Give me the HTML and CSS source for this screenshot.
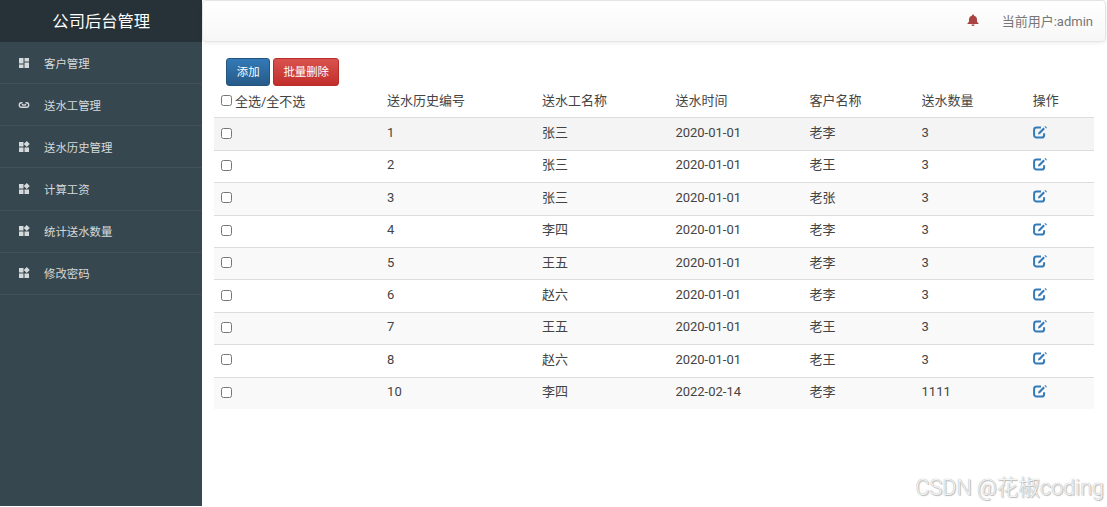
FILE: index.html
```
<!DOCTYPE html>
<html lang="zh-CN">
<head>
    <meta charset="UTF-8">
    <title>公司后台管理</title>
    <link rel="stylesheet" href="styles.css">
</head>
<body>
    <svg class="sprite">
        <symbol id="dashboard" viewBox="0 0 24 24"><path d="M2 2h9v11H2zM13 2h9v7h-9zM2 15h9v7H2zM13 11h9v11h-9z"/></symbol>
        <symbol id="link" viewBox="0 0 24 24"><path d="M9 7.500H7a4.500 4.500 0 0 0 0 9h10a4.500 4.500 0 0 0 0-9h-2M8 10.500c2 2.500 6 2.500 8 0" fill="none" stroke="currentColor" stroke-width="2.600"/></symbol>
        <symbol id="widgets" viewBox="0 0 24 24"><path d="M2 2h9v9H2zM2 13h9v9H2zM13 13h9v9h-9zM17.500 0l6 6-6 6-6-6z"/></symbol>
        <symbol id="bell" viewBox="0 0 24 24"><path d="M12 1c1.200 0 2 .8 2 2v.6c3.800.9 6 3.600 6 7.400v4.500l3 3V20H1v-1.500l3-3V11c0-3.800 2.200-6.500 6-7.400V3c0-1.200.8-2 2-2zM9 21h6a3 3 0 0 1-6 0z"/></symbol>
        <symbol id="edit" viewBox="0 0 14 13"><path d="M8 1.600H3.500A2.400 2.400 0 0 0 1.100 4v5.200a2.400 2.400 0 0 0 2.400 2.400h5.200a2.400 2.400 0 0 0 2.400-2.400V7.200" fill="none" stroke="currentColor" stroke-width="2"/><path d="M5 8.600l.5-2.200 4.900-4.900 1.500 1.500-4.900 4.900z"/><path d="M11.500.7l.5-.5h.6l1.100 1.100v.6l-.5.500z"/></symbol>
    </svg>
    <div class="sidebar">
        <div class="logo">公司后台管理</div>
        <ul class="menu">
            <li><svg><use href="#dashboard"/></svg>客户管理</li>
            <li><svg><use href="#link"/></svg>送水工管理</li>
            <li><svg><use href="#widgets"/></svg>送水历史管理</li>
            <li><svg><use href="#widgets"/></svg>计算工资</li>
            <li><svg><use href="#widgets"/></svg>统计送水数量</li>
            <li><svg><use href="#widgets"/></svg>修改密码</li>
        </ul>
    </div>
    <div class="main">
        <div class="navbar">
            <svg class="bell"><use href="#bell"/></svg>
            <span>当前用户:admin</span>
        </div>
        <div class="content">
            <div class="toolbar">
                <button class="btn btn-primary">添加</button>
                <button class="btn btn-danger">批量删除</button>
            </div>
            <div class="table">
                <div class="row head">
                    <label><input type="checkbox" id="checkAll">全选/全不选</label>
                    <span>送水历史编号</span><span>送水工名称</span><span>送水时间</span><span>客户名称</span><span>送水数量</span><span>操作</span>
                </div>
                <div id="rows"></div>
            </div>
        </div>
    </div>
    <div class="watermark">CSDN @花椒coding</div>
    <script>
        const rows = document.getElementById('rows');
        const checkAll = document.getElementById('checkAll');
        const history = [
            [1, '张三', '2020-01-01', '老李', 3],
            [2, '张三', '2020-01-01', '老王', 3],
            [3, '张三', '2020-01-01', '老张', 3],
            [4, '李四', '2020-01-01', '老李', 3],
            [5, '王五', '2020-01-01', '老李', 3],
            [6, '赵六', '2020-01-01', '老李', 3],
            [7, '王五', '2020-01-01', '老王', 3],
            [8, '赵六', '2020-01-01', '老王', 3],
            [10, '李四', '2022-02-14', '老李', 1111]
        ];

        rows.innerHTML = history.map(item => `
            <div class="row">
                <label><input type="checkbox"></label>
                ${item.map(value => `<span>${value}</span>`).join('')}
                <svg class="edit"><use href="#edit"/></svg>
            </div>`).join('');

        checkAll.addEventListener('change', () => {
            rows.querySelectorAll('input').forEach(box => box.checked = checkAll.checked);
        });
    </script>
</body>
</html>
```
FILE: styles.css
```
* {
    box-sizing: border-box;
}
body {
    margin: 0;
    display: flex;
    height: 507px;
    overflow: hidden;
    font-family: Roboto, "Noto Sans CJK SC", sans-serif;
    font-size: 13px;
    color: #444;
    background: #fff;
}
.sprite {
    position: absolute;
    width: 0;
    height: 0;
}
svg {
    fill: currentColor;
}
.sidebar {
    width: 202.400px;
    height: 506px;
    flex-shrink: 0;
    background: #37474f;
}
.logo {
    height: 42px;
    padding-top: 1px;
    line-height: 42px;
    text-align: center;
    font-size: 16.300px;
    color: #fff;
    background: #263238;
}
.menu {
    list-style: none;
    margin: 0;
    padding: 0;
}
.menu li {
    display: flex;
    align-items: center;
    height: 42.150px;
    padding-left: 18px;
    font-size: 11.400px;
    color: #d5dadc;
    border-bottom: 1px solid #435259;
}
.menu svg {
    width: 12px;
    height: 12px;
    margin-right: 14px;
}
.main {
    flex: 1;
    min-width: 0;
}
.navbar {
    display: flex;
    justify-content: flex-end;
    align-items: center;
    height: 42px;
    margin-right: 1px;
    padding: 0 12px 2px 0;
    font-size: 13px;
    color: #777;
    border: 1px solid #e4e4e4;
    border-radius: 4px;
    background: linear-gradient(#fff, #f7f7f7);
    box-shadow: 0 1px 4px rgba(0, 0, 0, 0.08);
}
.bell {
    width: 12px;
    height: 12px;
    margin-right: 23px;
    color: #a94442;
}
.content {
    padding: 16px 13px 0 12px;
}
.toolbar {
    display: flex;
    gap: 3px;
    padding-left: 12.100px;
}
.btn {
    height: 28px;
    padding: 0 9px 2px;
    font-family: inherit;
    font-size: 11.400px;
    color: #fff;
    border: 1px solid;
    border-radius: 3px;
    cursor: pointer;
}
.btn-primary {
    width: 43.500px;
    border-color: #245580;
    background: linear-gradient(#337ab7, #265a88);
}
.btn-danger {
    width: 66.500px;
    border-color: #b92c28;
    background: linear-gradient(#d9534f, #c12e2a);
}
.row {
    display: grid;
    grid-template-columns: 166.200px 155px 133.300px 134.200px 112px 111.300px 1fr;
    align-items: center;
    height: 32.400px;
    padding: 0 0 2px 6.500px;
    border-top: 1px solid #ddd;
}
.row:nth-child(odd) {
    background: #f9f9f9;
}
#rows .row:first-child {
    background: #f4f4f4;
}
.row span {
    line-height: 18px;
}
.row.head {
    height: 31.400px;
    border-top: none;
    background: none;
}
.row label {
    display: flex;
    align-items: center;
}
.row input {
    width: 11px;
    height: 11px;
    margin: 0 3px 0 0;
}
.edit {
    width: 14px;
    height: 13px;
    margin-top: -2px;
    color: #337ab7;
}
.watermark {
    position: absolute;
    right: 3px;
    bottom: 5px;
    font-size: 21.600px;
    font-weight: 300;
    line-height: 28px;
    color: #f4f4f4;
    text-shadow: 0 0 1px #999, 1px 1px 1px #bbb;
}
```
